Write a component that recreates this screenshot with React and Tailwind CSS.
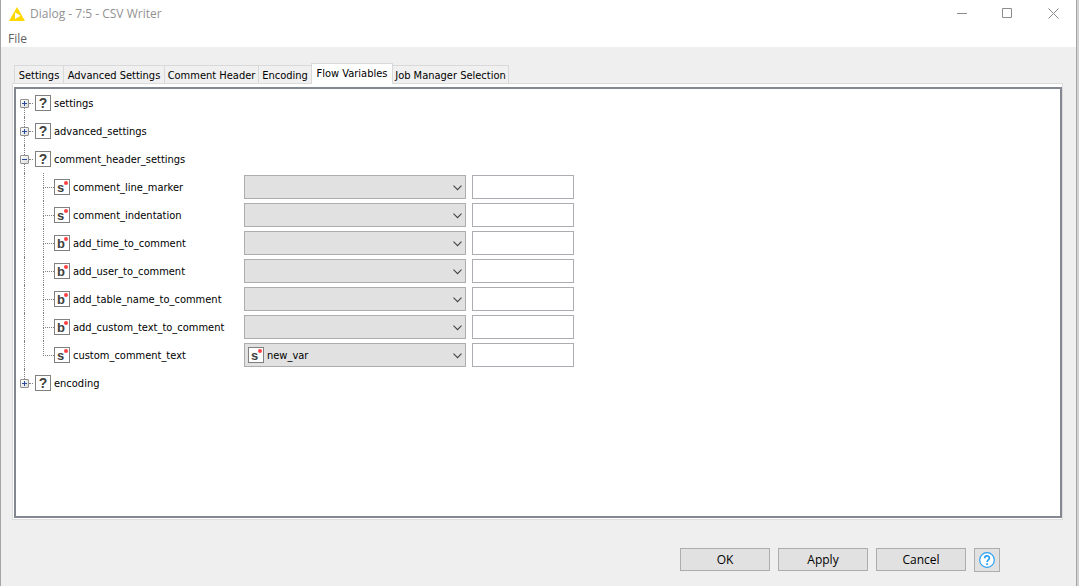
import React, { useState } from "react";

const TABS = [
  { label: "Settings", width: "w-[50px]" },
  { label: "Advanced Settings", width: "w-[101px]" },
  { label: "Comment Header", width: "w-[94px]" },
  { label: "Encoding", width: "w-[53px]" },
  { label: "Flow Variables", width: "w-[82px]" },
  { label: "Job Manager Selection", width: "w-[116px]" },
];

const TREE = [
  { name: "settings" },
  { name: "advanced_settings" },
  {
    name: "comment_header_settings",
    children: [
      { name: "comment_line_marker", type: "s" },
      { name: "comment_indentation", type: "s" },
      { name: "add_time_to_comment", type: "b" },
      { name: "add_user_to_comment", type: "b" },
      { name: "add_table_name_to_comment", type: "b" },
      { name: "add_custom_text_to_comment", type: "b" },
      { name: "custom_comment_text", type: "s", variable: "new_var" },
    ],
  },
  { name: "encoding" },
];

function TypeIcon({ type }) {
  const typed = type !== "?";
  return (
    <span
      aria-hidden="true"
      className={`relative flex size-4 shrink-0 items-center border border-[#808080] bg-white font-['Liberation_Sans',sans-serif] leading-none font-bold text-[#404040] ${
        typed ? "pt-px pl-[2px] text-[13px]" : "justify-center text-[14px]"
      }`}
    >
      {type}
      {typed && <span className="absolute top-px right-px size-1 rounded-full bg-[#ff4040]" />}
    </span>
  );
}

function Expander({ open, label, onClick }) {
  return (
    <button
      type="button"
      aria-expanded={open}
      aria-label={label}
      onClick={onClick}
      className="size-[9px] shrink-0 rounded-[1px] border border-[#919191] bg-linear-to-br from-white to-[#dcdcdc]"
    >
      <svg viewBox="0 0 7 7" className="block size-[7px]" shapeRendering="crispEdges">
        <path d={open ? "M1 3h5v1H1z" : "M1 3h5v1H1zM3 1h1v5H3z"} fill="#2b4a9b" />
      </svg>
    </button>
  );
}

function VariableRow({ item, last }) {
  return (
    <li className="flex h-7 items-center">
      <span className="ml-1 h-7 w-[19px] shrink-0 border-l border-dotted border-[#808080]" />
      <span className="flex h-7 w-[11px] shrink-0 flex-col">
        <span className="h-[15px] border-b border-l border-dotted border-[#808080]" />
        {!last && <span className="flex-1 border-l border-dotted border-[#808080]" />}
      </span>
      <TypeIcon type={item.type} />
      <label htmlFor={item.name} className="w-[174px] shrink-0 pt-[2px] pl-[3px]">
        {item.name}
      </label>
      <span className="relative flex h-6 w-[222px] shrink-0 items-center">
        <select
          id={item.name}
          defaultValue={item.variable ?? ""}
          className={`h-6 w-full appearance-none rounded-none border border-[#adadad] bg-[#e1e1e1] pt-[2px] pr-5 ${item.variable ? "pl-[22px]" : "pl-1"}`}
        >
          <option value="" />
          {item.variable && <option value={item.variable}>{item.variable}</option>}
        </select>
        {item.variable && (
          <span className="pointer-events-none absolute left-1">
            <TypeIcon type={item.type} />
          </span>
        )}
        <svg viewBox="0 0 9 6" className="pointer-events-none absolute top-[10px] right-1 h-[6px] w-[9px]" fill="none">
          <path d="M.5 .7l4 4 4-4" stroke="#444" strokeWidth="1.1" />
        </svg>
      </span>
      <input
        type="text"
        aria-label={`${item.name} output variable`}
        className="ml-[6px] h-6 w-[102px] shrink-0 border border-[#abadb3] bg-white px-1"
      />
    </li>
  );
}

function TreeGroup({ node, first, last }) {
  const [open, setOpen] = useState(Boolean(node.children));
  return (
    <li>
      <div className="flex h-7 items-center">
        <span className="flex h-7 w-[9px] shrink-0 flex-col">
          <span className={`ml-1 h-[10px] ${first ? "" : "border-l border-dotted border-[#808080]"}`} />
          <Expander open={open} label={`Toggle ${node.name}`} onClick={() => setOpen(!open)} />
          <span className={`ml-1 flex-1 ${last ? "" : "border-l border-dotted border-[#808080]"}`} />
        </span>
        <span className="mr-[2px] w-1 border-t border-dotted border-[#808080]" />
        <TypeIcon type="?" />
        <span className="pt-[2px] pl-[3px]">{node.name}</span>
      </div>
      {open && node.children && (
        <ul>
          {node.children.map((item, i) => (
            <VariableRow key={item.name} item={item} last={i === node.children.length - 1} />
          ))}
        </ul>
      )}
    </li>
  );
}

function CaptionButton({ label, children }) {
  return (
    <button type="button" aria-label={label} className="flex h-[27px] w-[46px] items-center justify-center">
      <svg viewBox="0 0 11 11" className="size-[11px]" fill="none" stroke="#8c8c8c">
        {children}
      </svg>
    </button>
  );
}

function DialogButton({ children }) {
  return (
    <button type="button" className="h-[23px] w-[90px] border border-[#adadad] bg-[#e1e1e1]">
      {children}
    </button>
  );
}

export default function App() {
  const [active, setActive] = useState("Flow Variables");
  return (
    <div className="flex min-h-screen bg-[#d2d2d2] pr-[2px] font-['DejaVu_Sans_Condensed','DejaVu_Sans',sans-serif] text-[11px] leading-4 text-black">
      <div className="flex min-w-0 flex-1 flex-col border-x border-[#a5a5a5] bg-[#efefef]">
        <header className="bg-white">
          <div className="flex h-[27px] items-center pl-2">
            <svg viewBox="0 0 16 14" className="h-[14px] w-4">
              <path d="M8 0l8 14H0z" fill="#ffd800" />
              <path d="M6 5.2l5.6 3.6L6 12z" fill="#fff" />
            </svg>
            <h1 className="flex-1 pl-[5px] font-['Open_Sans',sans-serif] text-[12px] font-normal text-[#929292]">
              Dialog - 7:5 - CSV Writer
            </h1>
            <CaptionButton label="Minimize">
              <path d="M1 5.5h10" />
            </CaptionButton>
            <CaptionButton label="Maximize">
              <path d="M.5 .5h9v9h-9z" />
            </CaptionButton>
            <CaptionButton label="Close">
              <path d="M.5 .5l10 10M10.5 .5l-10 10" />
            </CaptionButton>
          </div>
          <nav className="flex h-5 items-center pt-1 pl-[7px] font-['Open_Sans',sans-serif] text-[12px] text-[#606060]">
            <button type="button">File</button>
          </nav>
        </header>

        <main className="flex flex-1 flex-col pt-4 pr-[13px] pl-[11px]">
          <div role="tablist" className="flex items-end pl-[2px]">
            {TABS.map(({ label, width }, i) => (
              <button
                key={label}
                type="button"
                role="tab"
                aria-selected={label === active}
                onClick={() => setActive(label)}
                className={`${width} border-t border-r border-[#d9d9d9] text-center whitespace-nowrap ${i === 0 || label === active ? "border-l" : ""} ${
                  label === active ? "z-10 -mb-px -ml-px h-[21px] bg-white" : "h-[18px] bg-[#f0f0f0] pt-[2px]"
                }`}
              >
                {label}
              </button>
            ))}
          </div>
          <section role="tabpanel" className="flex flex-1 flex-col border border-[#dcdcdc] bg-white pt-[3px] pb-px pl-px">
            <div className="flex-1 overflow-auto border-2 border-[#828790] pl-1">
              <ul>
                {TREE.map((node, i) => (
                  <TreeGroup key={node.name} node={node} first={i === 0} last={i === TREE.length - 1} />
                ))}
              </ul>
            </div>
          </section>
        </main>

        <footer className="flex items-start justify-end gap-2 pt-7 pr-[76px] pb-[14px] font-['Open_Sans',sans-serif] text-[12px]">
          <DialogButton>OK</DialogButton>
          <DialogButton>Apply</DialogButton>
          <DialogButton>Cancel</DialogButton>
          <button
            type="button"
            aria-label="Help"
            className="flex h-6 w-[26px] items-center justify-center border border-[#adadad] bg-[#e1e1e1]"
          >
            <svg viewBox="0 0 16 16" className="size-4" fill="none" stroke="#2aa0f5">
              <circle cx="8" cy="8" r="7.3" fill="#fff" strokeWidth="1.2" />
              <path d="M5.7 6.3c0-3.2 4.7-3 4.7-.3 0 1.8-2.3 1.8-2.3 4" strokeWidth="1.7" />
              <path d="M8.1 11.2v1.7" strokeWidth="1.8" />
            </svg>
          </button>
        </footer>
      </div>
    </div>
  );
}
